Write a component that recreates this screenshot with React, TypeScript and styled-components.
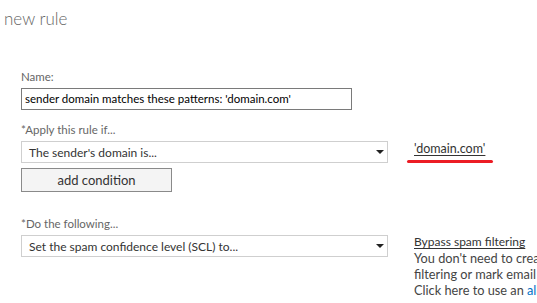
import React from 'react'
import styled, { createGlobalStyle } from 'styled-components'

const GlobalStyle = createGlobalStyle`
  html, body {
    margin: 0;
    padding: 0;
    background: #ffffff;
    overflow: hidden;
  }
  body {
    font-family: 'Segoe UI', Lato, 'Open Sans', sans-serif;
    color: #333333;
  }
`

const Page = styled.div({
  width: '537px',
  height: '303px',
  overflow: 'hidden',
})

const Title = styled.h1({
  margin: 0,
  padding: '6px 0 0 4px',
  fontSize: '17px',
  fontWeight: 300,
  lineHeight: '26px',
  color: '#666666',
})

const Form = styled.div({
  display: 'grid',
  gridTemplateColumns: '367px 1fr',
  columnGap: '26px',
  padding: '37px 0 0 21px',
})

const Label = styled.div<{ $top?: number }>(({ $top = 0 }) => ({
  gridColumn: '1 / 3',
  marginTop: `${$top}px`,
  fontSize: '11.5px',
  lineHeight: '16px',
  color: '#666666',
}))

const TextInput = styled.div({
  gridColumn: '1 / 3',
  width: '331px',
  height: '22px',
  boxSizing: 'border-box',
  marginTop: '3px',
  padding: '0 3px',
  border: '1px solid #7a7a7a',
  fontSize: '11.5px',
  lineHeight: '20px',
  color: '#000000',
  whiteSpace: 'nowrap',
})

const Select = styled.div({
  height: '22px',
  boxSizing: 'border-box',
  marginTop: '3px',
  padding: '0 7px',
  border: '1px solid #cfcfcf',
  display: 'flex',
  alignItems: 'center',
  justifyContent: 'space-between',
  fontSize: '12px',
  color: '#333333',
})

const Arrow = styled.span({
  width: 0,
  height: 0,
  borderLeft: '4px solid transparent',
  borderRight: '4px solid transparent',
  borderTop: '4px solid #222222',
  marginRight: '-4px',
})

const Side = styled.div<{ $top: number; $size: number }>(({ $top, $size }) => ({
  marginTop: `${$top}px`,
  fontSize: `${$size}px`,
  lineHeight: '16px',
  color: '#444444',
  minWidth: 0,
}))

const LinkText = styled.span({
  color: '#333333',
  textDecoration: 'underline',
  textUnderlineOffset: '2px',
  whiteSpace: 'nowrap',
})

const Marker = styled.div({
  width: '86px',
  height: '3px',
  marginTop: '3px',
  marginLeft: '-7px',
  borderRadius: '2px',
  background: '#ec1c24',
})

const Help = styled.div({
  width: '268px',
  fontSize: '12.75px',
  color: '#444444',
})

const BlueLink = styled.span({
  color: '#0072c6',
})

const Button = styled.div({
  gridColumn: '1 / 2',
  width: '151px',
  height: '24px',
  boxSizing: 'border-box',
  marginTop: '5px',
  border: '1px solid #8a8a8a',
  background: '#f4f4f4',
  display: 'flex',
  alignItems: 'center',
  justifyContent: 'center',
  fontSize: '13px',
  color: '#333333',
})

const SelectBox = ({ text }: { text: string }) => (
  <Select>
    <span>{text}</span>
    <Arrow />
  </Select>
)

export default function App() {
  return (
    <Page>
      <GlobalStyle />
      <Title>new rule</Title>
      <Form>
        <Label>Name:</Label>
        <TextInput>sender domain matches these patterns: 'domain.com'</TextInput>
        <Label $top={12}>*Apply this rule if...</Label>
        <SelectBox text="The sender's domain is..." />
        <Side $top={3} $size={12.5}>
          <LinkText>'domain.com'</LinkText>
          <Marker />
        </Side>
        <Button>add condition</Button>
        <Label $top={24}>*Do the following...</Label>
        <SelectBox text="Set the spam confidence level (SCL) to..." />
        <Side $top={2} $size={12}>
          <LinkText>Bypass spam filtering</LinkText>
          <Help>
            You don't need to create a rule to bypass spam filtering or mark email as spam.
            <br />
            Click here to use an <BlueLink>allow or block list</BlueLink>.
          </Help>
        </Side>
      </Form>
    </Page>
  )
}
